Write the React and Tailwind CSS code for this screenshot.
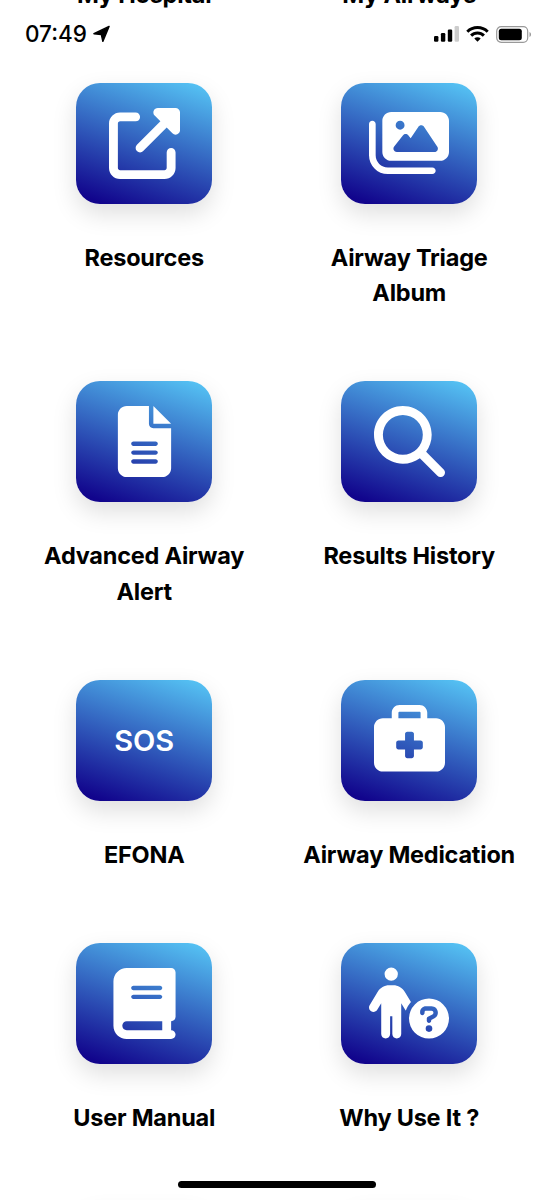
import { FaUpRightFromSquare, FaImages, FaFileLines, FaMagnifyingGlass, FaBriefcaseMedical, FaBook, FaPersonCircleQuestion } from 'react-icons/fa6';

const tiles = [
    { label: 'Resources', icon: <FaUpRightFromSquare size={71} /> },
    { label: 'Airway Triage Album', icon: <FaImages size={80} /> },
    { label: 'Advanced Airway Alert', icon: <FaFileLines size={71} /> },
    { label: 'Results History', icon: <FaMagnifyingGlass size={71} /> },
    { label: 'EFONA', icon: <span className="text-[29px] font-semibold">SOS</span> },
    { label: 'Airway Medication', icon: <FaBriefcaseMedical size={71} /> },
    { label: 'User Manual', icon: <FaBook size={71} /> },
    { label: 'Why Use It ?', icon: <FaPersonCircleQuestion size={80} /> },
    // row below the fold, only its shadow shows
    { label: '', icon: null },
    { label: '', icon: null },
];

const StatusBar = () => (
    <div className="absolute inset-x-0 top-0 flex h-[68px] items-center justify-between pl-[25px] pr-[22px] text-black">
        <div className="flex items-center gap-[6px]">
            <span className="text-[22.5px] font-medium leading-none">07:49</span>
            <svg width="17" height="18" viewBox="0 0 18 18" fill="currentColor" stroke="currentColor" strokeWidth="1.5" strokeLinejoin="round">
                <path d="M17 1 1 8.700l7.800.8L10.400 16.800z" />
            </svg>
        </div>
        <div className="flex items-center">
            <svg width="25" height="16" viewBox="0 0 25 16" fill="currentColor">
                <rect x="0" y="10" width="4.400" height="5.700" rx="1.200" />
                <rect x="6.900" y="7" width="4.400" height="8.700" rx="1.200" />
                <rect x="13.800" y="3.500" width="4.400" height="12.200" rx="1.200" />
                <rect x="20.600" y="0" width="4.400" height="15.700" rx="1.200" opacity="0.2" />
            </svg>
            <svg className="ml-[7px]" width="23" height="16" viewBox="0 0 23 16" fill="none" stroke="currentColor" strokeWidth="3">
                <path d="M1.300 5.700a14.500 14.500 0 0 1 20.400 0" />
                <path d="M5.100 9.600a9 9 0 0 1 12.800 0" />
                <path d="M11.500 15.800 8.300 12.600a4.600 4.600 0 0 1 6.400 0z" fill="currentColor" stroke="none" />
            </svg>
            <svg className="ml-[7px]" width="36" height="17" viewBox="0 0 36 17">
                <rect x="0.700" y="0.700" width="31" height="15.600" rx="4.500" fill="none" stroke="#999" strokeWidth="1.200" />
                <rect x="2.800" y="2.800" width="23" height="11.400" rx="2.500" fill="currentColor" />
                <path d="M33.500 6c2 .7 2 4.300 0 5z" fill="#999" />
            </svg>
        </div>
    </div>
);

const Label = ({ children }) => (
    <p className="w-[220px] shrink-0 text-center text-[23.5px] font-[650] leading-[35.5px] tracking-[-0.22px] text-black">{children}</p>
);

export default function App() {
    return (
        <div className="relative h-[1200px] w-[554px] overflow-hidden bg-white font-['Inter',sans-serif]">
            <div className="grid h-[12px] grid-cols-[265px_265px] overflow-hidden pl-[11.7px]">
                <div className="flex h-[12px] items-end justify-center">
                    <Label>My Hospital</Label>
                </div>
                <div className="flex h-[12px] items-end justify-center">
                    <Label>My Airways</Label>
                </div>
            </div>

            <div className="grid grid-cols-[265px_265px] gap-y-[70.600px] pl-[11.7px] pt-[70.700px]">
                {tiles.map((tile, i) => (
                    <div key={i} className="flex flex-col items-center gap-9">
                        <div className="flex h-[121px] w-[136px] items-center justify-center rounded-[24px] bg-[linear-gradient(19deg,#11048c_6%,#56c5f5_98%)] text-white shadow-[0_10px_24px_rgba(0,0,0,0.13)]">
                            {tile.icon}
                        </div>
                        <Label>{tile.label}</Label>
                    </div>
                ))}
            </div>

            <StatusBar />
            <div className="absolute bottom-[12px] left-1/2 h-[7px] w-[198px] -translate-x-1/2 rounded-full bg-black" />
        </div>
    );
}
